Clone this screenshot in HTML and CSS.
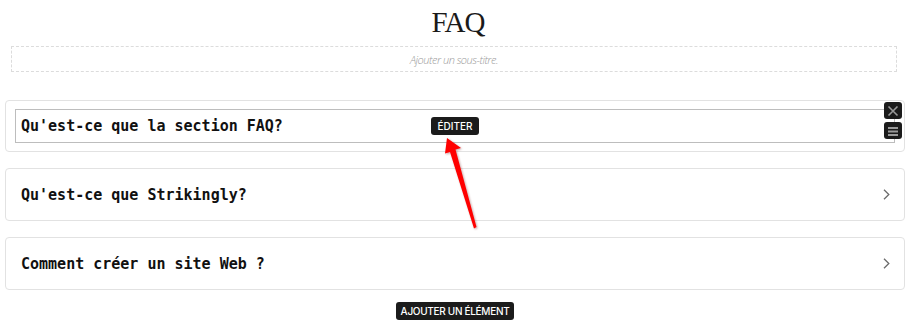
FILE: index.html
```html
<!DOCTYPE html>
<html lang="fr">
<head>
<meta charset="utf-8">
<title>FAQ</title>
<link rel="stylesheet" href="styles.css">
</head>
<body>
<div class="page">
  <h1 class="title">FAQ</h1>
  <div class="subtitle">Ajouter un sous-titre.</div>

  <div class="faq-list">
    <div class="card card-editing">
      <div class="card-inner">
        <span class="question">Qu'est-ce que la section FAQ?</span>
      </div>
      <button class="edit-btn">ÉDITER</button>
      <div class="ctrl ctrl-close">
        <svg width="12" height="12" viewBox="0 0 12 12"><path d="M1.5 1.5 L10.5 10.5 M10.5 1.5 L1.5 10.5" stroke="#9a9a9a" stroke-width="1.6" fill="none"/></svg>
      </div>
      <div class="ctrl ctrl-menu">
        <svg width="12" height="10" viewBox="0 0 12 10"><rect x="1" y="1" width="10" height="2" fill="#9a9a9a"/><rect x="1" y="4.5" width="10" height="2" fill="#9a9a9a"/><rect x="1" y="8" width="10" height="2" fill="#9a9a9a"/></svg>
      </div>
    </div>

    <div class="card">
      <span class="question">Qu'est-ce que Strikingly?</span>
      <svg class="chev" width="7" height="11" viewBox="0 0 7 11"><path d="M1 0.8 L5.8 5.5 L1 10.2" stroke="#6b6b6b" stroke-width="1.3" fill="none"/></svg>
    </div>

    <div class="card">
      <span class="question">Comment créer un site Web ?</span>
      <svg class="chev" width="7" height="11" viewBox="0 0 7 11"><path d="M1 0.8 L5.8 5.5 L1 10.2" stroke="#6b6b6b" stroke-width="1.3" fill="none"/></svg>
    </div>
  </div>

  <div class="add-row">
    <button class="add-btn">AJOUTER UN ÉLÉMENT</button>
  </div>

  <svg class="arrow" width="916" height="324" viewBox="0 0 916 324">
    <defs>
      <filter id="sh" x="-20%" y="-20%" width="140%" height="140%">
        <feGaussianBlur stdDeviation="0.8"/>
      </filter>
    </defs>
    <polygon points="447,138 461,148 455.5,149.5 476.5,227 474,228.5 450,152 445,153.5" fill="#600" opacity="0.35" filter="url(#sh)" transform="translate(1,1)"/>
    <polygon points="447,138 461,148 455.5,149.5 476.5,227 474,228.5 450,152 445,153.5" fill="#ff0000"/>
  </svg>
</div>
</body>
</html>
```

FILE: styles.css
```css
* { box-sizing: border-box; }
html, body { margin: 0; padding: 0; background: #fff; }
.page {
  position: relative;
  width: 916px;
  height: 324px;
  overflow: hidden;
  font-family: "Open Sans", sans-serif;
}
.title {
  margin: 0;
  padding-top: 6px;
  height: 38px;
  text-align: center;
  font-family: "Liberation Serif", "DejaVu Serif", serif;
  font-weight: 400;
  font-size: 29px;
  line-height: 32px;
  color: #1a1a1a;
  letter-spacing: -1px;
}
.subtitle {
  margin: 8px 19px 0 11px;
  height: 26px;
  border: 1px dashed #dcdcdc;
  display: flex;
  align-items: center;
  justify-content: center;
  font-family: "Open Sans", sans-serif;
  font-style: italic;
  font-weight: 300;
  font-size: 11px;
  letter-spacing: -0.5px;
  color: #9a9a9a;
}
.faq-list {
  margin: 28px 11px 0 5px;
  display: flex;
  flex-direction: column;
  gap: 16px;
}
.card {
  position: relative;
  height: 53px;
  border: 1px solid #e2e2e2;
  border-radius: 4px;
  display: flex;
  align-items: center;
  justify-content: space-between;
  padding: 0 14px 0 15px;
}
.card-editing {
  display: block;
  height: 52px;
  padding: 8px 9px 8px 9px;
}
.card-inner {
  height: 34px;
  border: 1px solid #bdbdbd;
  display: flex;
  align-items: center;
  padding-left: 5px;
}
.question {
  font-family: "DejaVu Sans Mono", "Liberation Mono", monospace;
  font-weight: 700;
  font-size: 15px;
  color: #111;
  letter-spacing: 0;
}
.chev { display: block; }
.edit-btn {
  position: absolute;
  left: 425px;
  top: 16px;
  width: 48px;
  height: 18px;
  padding: 0;
  border: none;
  border-radius: 3px;
  background: #1b1b1b;
  color: #fff;
  font-family: "Inter", "Noto Sans", sans-serif;
  font-weight: 500;
  font-size: 10px;
  line-height: 18px;
  text-align: center;
}
.ctrl {
  position: absolute;
  left: 878px;
  width: 18px;
  border-radius: 3px;
  background: #1b1b1b;
  display: flex;
  align-items: center;
  justify-content: center;
}
.ctrl-close { top: 1px; height: 17px; }
.ctrl-menu { top: 21px; height: 17px; }
.add-row {
  margin-top: 12px;
  display: flex;
  justify-content: center;
  padding-right: 6px;
}
.add-btn {
  height: 18px;
  width: 118px;
  padding: 0;
  border: none;
  border-radius: 3px;
  background: #1b1b1b;
  color: #fff;
  font-family: "Inter", "Noto Sans", sans-serif;
  font-weight: 500;
  font-size: 10px;
  letter-spacing: -0.3px;
  line-height: 18px;
  text-align: center;
}
.arrow {
  position: absolute;
  left: 0;
  top: 0;
  pointer-events: none;
}
```
